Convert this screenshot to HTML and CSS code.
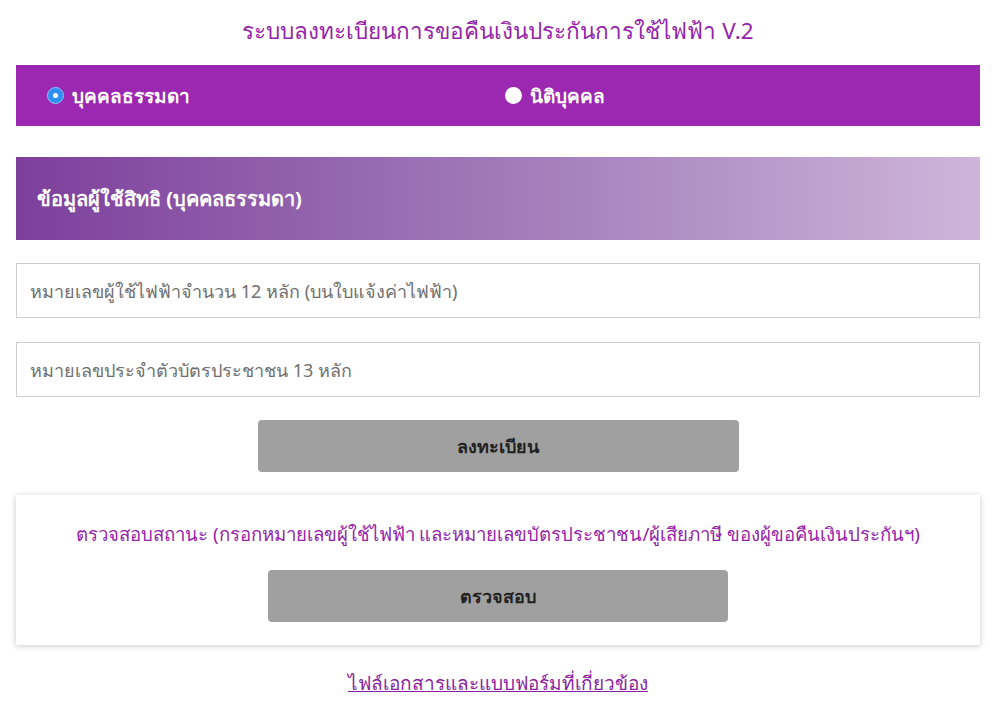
FILE: index.html
```html
<!DOCTYPE html>
<html lang="th">
<head>
<meta charset="utf-8">
<title>ระบบลงทะเบียน</title>
<link rel="stylesheet" href="styles.css">
</head>
<body>
<div class="page">
  <h1 class="title">ระบบลงทะเบียนการขอคืนเงินประกันการใช้ไฟฟ้า V.2</h1>
  <div class="typebar">
    <label class="opt"><span class="radio checked"></span>บุคคลธรรมดา</label>
    <label class="opt"><span class="radio"></span>นิติบุคคล</label>
  </div>
  <div class="section-head">ข้อมูลผู้ใช้สิทธิ (บุคคลธรรมดา)</div>
  <input class="field" type="text" placeholder="หมายเลขผู้ใช้ไฟฟ้าจำนวน 12 หลัก (บนใบแจ้งค่าไฟฟ้า)">
  <input class="field" type="text" placeholder="หมายเลขประจำตัวบัตรประชาชน 13 หลัก">
  <button class="btn btn-register">ลงทะเบียน</button>
  <div class="card">
    <p class="card-text">ตรวจสอบสถานะ (กรอกหมายเลขผู้ใช้ไฟฟ้า และหมายเลขบัตรประชาชน/ผู้เสียภาษี ของผู้ขอคืนเงินประกันฯ)</p>
    <button class="btn btn-check">ตรวจสอบ</button>
  </div>
  <a class="doclink" href="#">ไฟล์เอกสารและแบบฟอร์มที่เกี่ยวข้อง</a>
</div>
</body>
</html>
```

FILE: styles.css
```css
* { box-sizing: border-box; }
html, body { margin: 0; padding: 0; background: #fff; }
body {
  font-family: "Noto Sans", "Liberation Sans", "DejaVu Sans", sans-serif;
  color: #333;
}
.page {
  width: 964px;
  margin-left: 16px;
  display: flex;
  flex-direction: column;
  align-items: center;
}
.title {
  margin: 12px 0 0;
  height: 39px;
  font-size: 22.5px;
  font-weight: normal;
  color: #9424a8;
  line-height: 37px;
  text-align: center;
}
.typebar {
  width: 100%;
  height: 61px;
  margin-top: 14px;
  background: #9c27b0;
  display: flex;
  align-items: center;
  padding-left: 31px;
}
.opt {
  display: flex;
  align-items: center;
  gap: 8px;
  color: #fff;
  font-size: 19px;
  font-weight: bold;
  width: 458px;
}
.radio {
  width: 17px;
  height: 17px;
  border-radius: 50%;
  background: #fff;
  display: inline-block;
  flex: none;
}
.radio.checked {
  background: #2f8ff0;
  position: relative;
  border: 1px solid #8ec3f7;
}
.radio.checked::after {
  content: "";
  position: absolute;
  left: 5px; top: 5px;
  width: 5px; height: 5px;
  border-radius: 50%;
  background: #fff;
}
.section-head {
  width: 100%;
  height: 83px;
  margin-top: 31px;
  background: linear-gradient(to right, #7d3f9c, #a07ab8 50%, #ceb5da);
  color: #fff;
  font-size: 20px;
  font-weight: bold;
  display: flex;
  align-items: center;
  padding-left: 21px;
}
.field {
  width: 100%;
  height: 55px;
  margin-top: 23px;
  border: 1px solid #cfcfcf;
  padding: 0 13px;
  font-family: inherit;
  font-size: 18px;
  color: #555;
  background: #fff;
}
.field::placeholder { color: #6f6f6f; }
.field + .field { margin-top: 24px; }
.btn {
  background: #a0a0a0;
  border: none;
  border-radius: 4px;
  color: #222;
  font-family: inherit;
  font-size: 18px;
  font-weight: bold;
  height: 52px;
}
.btn-register {
  width: 481px;
  margin-top: 23px;
}
.card {
  width: 100%;
  margin-top: 23px;
  height: 150px;
  background: #fff;
  box-shadow: 0 1px 6px rgba(0,0,0,0.22);
  display: flex;
  flex-direction: column;
  align-items: center;
}
.card-text {
  margin: 26px 0 0;
  color: #9424a8;
  font-size: 18.6px;
  line-height: 25px;
}
.btn-check {
  width: 460px;
  margin-top: 24px;
}
.doclink {
  margin-top: 23px;
  color: #8b1fa0;
  font-size: 19px;
  text-decoration: underline;
}
```
